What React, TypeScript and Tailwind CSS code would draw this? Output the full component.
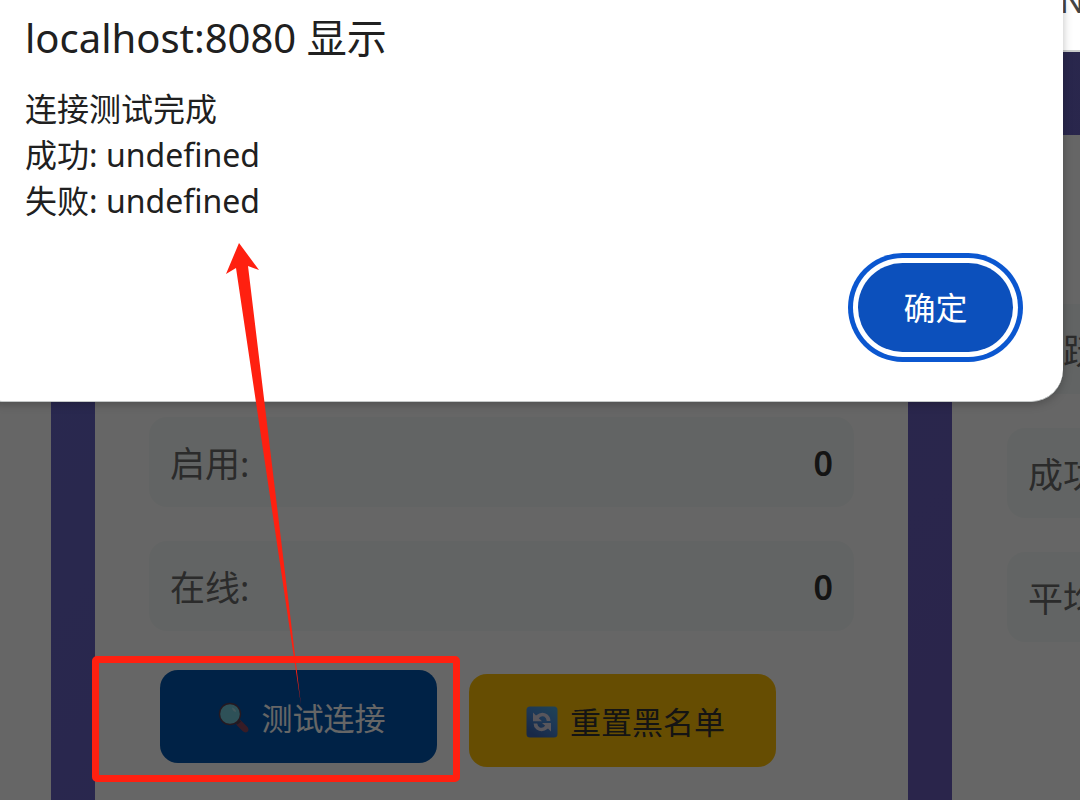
import React from "react";

function SearchIcon() {
  return (
    <svg viewBox="0 0 32 32" className="h-8 w-8 shrink-0" aria-hidden="true">
      <path d="M18.5 20.5 L22 17.5 L29.5 25 Q31.5 28 29.5 29.8 Q27 31.5 24.5 29 L18.5 23 Z" fill="#8c4660" />
      <path d="M17 20 L20.5 17 L23 19.5 L19.5 22.5 Z" fill="#4c4258" />
      <circle cx="12" cy="12" r="11.2" fill="#5c4054" />
      <circle cx="12" cy="12" r="9.8" fill="#74cbdc" />
      <path d="M14 5.4 Q18 6.4 18 10 Q14.6 9.4 14 5.4 Z" fill="#a8dbe6" />
    </svg>
  );
}

function RefreshIcon() {
  return (
    <svg viewBox="0 0 32 32" className="h-8 w-8 shrink-0" aria-hidden="true">
      <defs>
        <linearGradient id="tile" x1="1" y1="0" x2="0.4" y2="1">
          <stop offset="0" stopColor="#4fa8d8" />
          <stop offset="0.5" stopColor="#4a8cd8" />
          <stop offset="1" stopColor="#3d68b4" />
        </linearGradient>
      </defs>
      <rect x="0.5" y="0.5" width="31" height="31" rx="3.5" fill="url(#tile)" />
      <path d="M7 6.5 L10 9.4 Q16 4.6 21.4 8.6 Q24.6 11.4 24.4 15 L20.8 15 Q20.4 11.8 18.2 10.6 Q15.2 9.4 12.8 12.2 L16 15.2 L7 15.2 Z" fill="#dcd6e6" />
      <path d="M25 25.5 L22 22.6 Q16 27.4 10.6 23.4 Q7.4 20.6 7.6 17.4 L11.2 17.4 Q11.6 20.2 13.8 21.4 Q16.8 22.6 19.2 19.8 L16 17 L25 17 Z" fill="#dcd6e6" />
    </svg>
  );
}

function StatRow({ label, value }: { label: string; value: string }) {
  return (
    <div className="flex h-[90px] items-center justify-between rounded-[18px] bg-[#f6fbf9] px-[21px]">
      <span className="pt-1 text-[35px] leading-[48px] whitespace-nowrap text-[#6c6c6c]">{label}</span>
      <span className="pt-px text-[34px] leading-[48px] font-semibold text-[#333333]">{value}</span>
    </div>
  );
}

export default function App() {
  return (
    <div className="relative flex h-screen flex-col overflow-hidden bg-white font-['Noto_Sans','Noto_Sans_CJK_SC',sans-serif]">
      <header className="flex h-[52px] shrink-0 items-start justify-end overflow-hidden border-b-2 border-[#c9cccc] bg-white">
        <span className="-mt-5 w-5 text-[32px] leading-[42px] text-[#444444]">N</span>
      </header>

      <div className="relative flex-1 overflow-hidden bg-linear-135 from-[#6568c8] to-[#6a5cba]">
        <main className="flex h-full gap-11 pt-[83px]">
          <section className="w-[51px] shrink-0 bg-white" />

          <section className="min-w-0 flex-1 bg-white px-[54px] pt-[282px]">
            <div className="flex flex-col gap-[34px]">
              <StatRow label="启用:" value="0" />
              <StatRow label="在线:" value="0" />
            </div>
            <div className="flex items-center gap-8 px-[11px] pt-[39px]">
              <button
                type="button"
                className="mb-2 flex h-[93px] w-[277px] shrink-0 items-center justify-center gap-3 rounded-[18px] bg-[#0055ae] pt-0.5 pl-1.5 text-[31px] leading-10 text-white"
              >
                <SearchIcon />
                测试连接
              </button>
              <button
                type="button"
                className="flex h-[93px] w-[307px] shrink-0 items-center justify-center gap-3 rounded-[18px] bg-[#ffc107] pt-0.5 pl-1.5 text-[31px] leading-10 text-[#333333]"
              >
                <RefreshIcon />
                重置黑名单
              </button>
            </div>
          </section>

          <section className="w-32 shrink-0 overflow-hidden bg-white pt-[169px] pl-[55px]">
            <div className="flex w-[704px] flex-col gap-[34px]">
              <StatRow label="活跃:" value="" />
              <StatRow label="成功" value="" />
              <StatRow label="平均" value="" />
            </div>
          </section>
        </main>
        <div className="absolute inset-0 bg-black/60" />
      </div>

      <div
        role="alertdialog"
        aria-labelledby="dialog-title"
        aria-describedby="dialog-message"
        className="absolute top-0 right-[17px] -left-7 flex flex-col rounded-b-[32px] border-b border-[#c4c8c8] bg-white pt-[10px] pr-[50px] pb-[49px] pl-[53px] text-[#202020] shadow-[0_2px_10px_rgba(0,0,0,0.25)]"
      >
        <h1 id="dialog-title" className="text-[40px] leading-[56px]">
          localhost:8080 显示
        </h1>
        <p id="dialog-message" className="mt-5 text-[32px] leading-[46px]">
          连接测试完成
          <br />
          成功: undefined
          <br />
          失败: undefined
        </p>
        <button
          type="button"
          className="mt-[39px] h-[89px] w-[155px] self-end rounded-full bg-[#0c50bc] text-[32px] leading-[46px] text-white ring-5 ring-[#0b57d0] ring-offset-5 ring-offset-white"
        >
          确定
        </button>
      </div>

      <div className="pointer-events-none absolute top-[656px] left-[92px] h-[126px] w-[368px] rounded-[5px] border-7 border-[#ff2010]" />
      <svg
        viewBox="0 0 40 465"
        className="pointer-events-none absolute top-[243px] left-[224px] h-[465px] w-10 overflow-visible"
        aria-hidden="true"
      >
        <path d="M15 0 L35 27 L24 23 L77 462 L12 25 L2 31 Z" fill="#ff2010" />
      </svg>
    </div>
  );
}
